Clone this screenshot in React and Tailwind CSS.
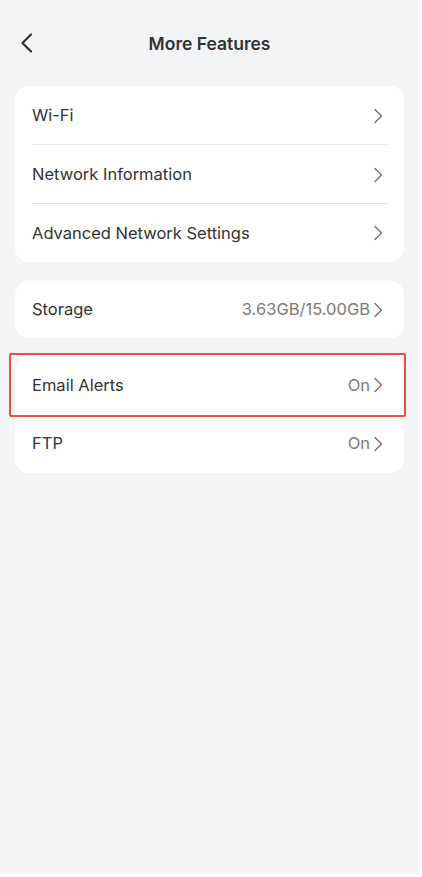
const Chevron = () => (
  <svg width="10" height="16" viewBox="0 0 10 16" fill="none" className="shrink-0">
    <path d="M2 1.5 L8.5 8 L2 14.5" stroke="#777" strokeWidth="1.5" strokeLinecap="round" strokeLinejoin="round" />
  </svg>
);

function Row({ label, value, last, h = "h-[58px]" }) {
  return (
    <div className={`flex items-center ${h} pl-[17px] pr-[21px] relative`}>
      <span className="flex-1 text-[16.5px] text-[#333]">{label}</span>
      {value && <span className="text-[16.5px] text-[#7a7a7a] mr-[3px]">{value}</span>}
      <Chevron />
      {!last && <div className="absolute left-[17px] right-[17px] bottom-0 h-px bg-[#e4e4e4]" />}
    </div>
  );
}

export default function App() {
  return (
    <div className="min-h-screen bg-white" style={{ fontFamily: "Inter, 'Noto Sans', sans-serif" }}>
      <div className="w-[419px] h-[874px] bg-[#f3f4f6] flex flex-col">
        <div className="h-[86px] flex items-center relative pt-[3px]">
          <svg width="24" height="24" viewBox="0 0 24 24" fill="none" className="absolute left-[15px] top-[31px]">
            <path d="M16 3.5 L7.5 12 L16 20.5" stroke="#333" strokeWidth="2.2" strokeLinecap="round" strokeLinejoin="round" />
          </svg>
          <h1 className="w-full text-center text-[17.5px] font-semibold text-[#333]">More Features</h1>
        </div>

        <div className="mx-[15px] bg-white rounded-[14px]">
          <Row label="Wi-Fi" h="h-[59px]" />
          <Row label="Network Information" h="h-[59px]" />
          <Row label="Advanced Network Settings" last />
        </div>

        <div className="mx-[15px] mt-[19px] bg-white rounded-[14px]">
          <Row label="Storage" value="3.63GB/15.00GB" last h="h-[57px]" />
        </div>

        <div className="mx-[15px] mt-[18px] bg-white rounded-[14px] relative">
          <div className="absolute -left-[6px] -right-[2px] -top-[3px] h-[64px] border-[2px] border-[#f04b3f] rounded-[2px] pointer-events-none" />
          <Row label="Email Alerts" value="On" last />
          <Row label="FTP" value="On" last h="h-[59px]" />
        </div>
      </div>
    </div>
  );
}
